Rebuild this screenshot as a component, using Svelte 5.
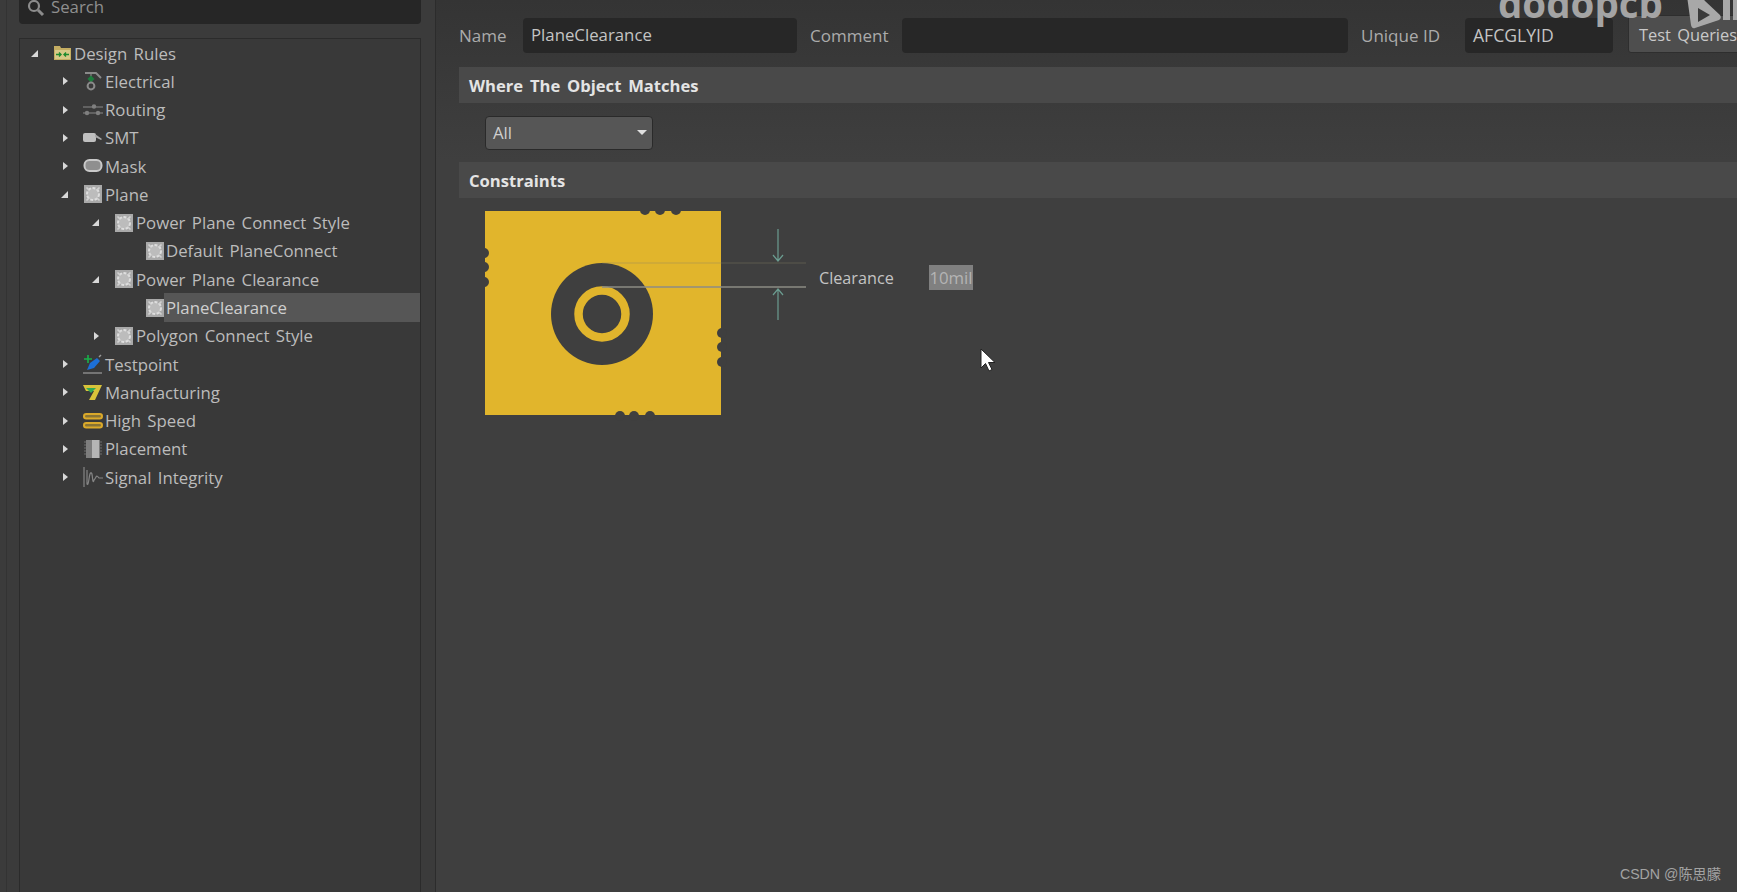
<script>
  const rows = [
    { label: 'Design Rules', depth: 0, open: true, icon: 'folder' },
    { label: 'Electrical', depth: 1, icon: 'electrical' },
    { label: 'Routing', depth: 1, icon: 'routing' },
    { label: 'SMT', depth: 1, icon: 'smt' },
    { label: 'Mask', depth: 1, icon: 'mask' },
    { label: 'Plane', depth: 1, open: true, icon: 'plane' },
    { label: 'Power Plane Connect Style', depth: 2, open: true, icon: 'plane' },
    { label: 'Default PlaneConnect', depth: 3, leaf: true, icon: 'plane' },
    { label: 'Power Plane Clearance', depth: 2, open: true, icon: 'plane' },
    { label: 'PlaneClearance', depth: 3, leaf: true, icon: 'plane', selected: true },
    { label: 'Polygon Connect Style', depth: 2, icon: 'plane' },
    { label: 'Testpoint', depth: 1, icon: 'testpoint' },
    { label: 'Manufacturing', depth: 1, icon: 'manufacturing' },
    { label: 'High Speed', depth: 1, icon: 'highspeed' },
    { label: 'Placement', depth: 1, icon: 'placement' },
    { label: 'Signal Integrity', depth: 1, icon: 'signal' }
  ]

  // scallops cut into the edges of the plane drawing
  const notches = [
    [160, -1], [175, -1], [191, -1],
    [-1, 42], [-1, 56], [-1, 71],
    [237, 122], [237, 136], [237, 151],
    [135, 205], [149, 205], [165, 205]
  ]
</script>

{#snippet icon(name)}
  <svg class="ico" width="20" height="20" viewBox="0 0 20 20">
    {#if name === 'folder'}
      <path d="M1 3h6l1 2h10v12H1z" fill="#c4ad62" />
      <rect x="2" y="7" width="15" height="9" fill="#d8c987" />
      <path d="M3 11.5h5M6 9.5l2 2-2 2M16 11.5h-5M13 9.5l-2 2 2 2" stroke="#1f8a2e" stroke-width="1.4" fill="none" />
    {:else if name === 'electrical'}
      <path d="M2 2h11l5 5" stroke="#8a8a8a" stroke-width="2" fill="none" />
      <path d="M8 3v6" stroke="#777" stroke-width="1.5" />
      <rect x="5.5" y="5.5" width="5" height="5" transform="rotate(45 8 8)" fill="#1c7c3c" />
      <circle cx="8" cy="15" r="3.4" stroke="#8a8a8a" stroke-width="2" fill="none" />
    {:else if name === 'routing'}
      <path d="M0 7h20M0 13h20" stroke="#6f6f6f" stroke-width="1.3" />
      <circle cx="11" cy="6.5" r="2.2" fill="#7f7f7f" />
      <circle cx="4" cy="13" r="2.2" fill="#7f7f7f" />
      <circle cx="15" cy="13" r="2.2" fill="#7f7f7f" />
    {:else if name === 'smt'}
      <rect x="0" y="5" width="13" height="9" rx="2" fill="#c0c0c0" />
      <path d="M12 6l7 5-1 1-6-3z" fill="#a8a8a8" />
    {:else if name === 'mask'}
      <rect x="1.5" y="4" width="17" height="11" rx="5" fill="#8f8f8f" stroke="#c9c9c9" stroke-width="2" />
    {:else if name === 'plane'}
      <rect x="1" y="1" width="18" height="18" fill="#a9a9a9" />
      <circle cx="10" cy="10" r="6" fill="#bcbcbc" stroke="#dedede" stroke-width="2" stroke-dasharray="3 1.5" />
      <path d="M3.5 3.5l2.5 2.5M16.5 3.5l-2.5 2.5M3.5 16.5l2.5-2.5M16.5 16.5l-2.5-2.5" stroke="#d2d2d2" stroke-width="1.6" />
    {:else if name === 'testpoint'}
      <path d="M0 19h19" stroke="#b0b0b0" stroke-width="1" />
      <path d="M5 1v8M1 5h8" stroke="#19b14a" stroke-width="1.6" />
      <path d="M4 16l3-7 7-5 3 3-6 7z" fill="#1d6fd6" />
      <path d="M16 3l2-2" stroke="#999" stroke-width="1.4" />
    {:else if name === 'manufacturing'}
      <path d="M0 3h19l-7 15H6l5-9H3z" fill="#d8c33a" />
      <path d="M3 6h10l-5 5z" fill="#2eaa55" />
    {:else if name === 'highspeed'}
      <rect x="1" y="3" width="18" height="4.5" rx="2.2" fill="#8a7434" stroke="#dba92a" stroke-width="2" />
      <rect x="1" y="12" width="18" height="4.5" rx="2.2" fill="#8a7434" stroke="#dba92a" stroke-width="2" />
    {:else if name === 'placement'}
      <rect x="3" y="1" width="14" height="18" fill="#7d7d7d" />
      <rect x="9" y="1" width="7" height="18" fill="#b5b5b5" />
      <path d="M1 3h2M1 6h2M1 9h2M1 12h2M1 15h2M17 3h2M17 6h2M17 9h2M17 12h2M17 15h2" stroke="#6f6f6f" />
    {:else if name === 'signal'}
      <path d="M1 0V20M4 3V17Q5 19 6 12T8 6Q9 5 9.5 11T11 13Q12 12 13 10T16 11H20" stroke="#858585" stroke-width="1.2" fill="none" />
    {/if}
  </svg>
{/snippet}

<div class="screen">
  <aside class="side">
    <div class="search">
      <svg width="18" height="18" viewBox="0 0 18 18">
        <circle cx="7" cy="7" r="5" fill="none" stroke="#8c8c8c" stroke-width="2.2" />
        <path d="M11 11l5 5" stroke="#8c8c8c" stroke-width="3" />
      </svg>
      <span>Search</span>
    </div>
    <div class="tree">
      {#each rows as r}
        <div class="row depth{r.depth}">
          {#if !r.leaf}
            <span class="caret" class:open={r.open}></span>
          {/if}
          {@render icon(r.icon)}
          <span class="label" class:selected={r.selected}>{r.label}</span>
        </div>
      {/each}
    </div>
  </aside>

  <main class="content">
    <div class="fields">
      <span class="cap c-name">Name</span>
      <div class="input w-name">PlaneClearance</div>
      <span class="cap c-comment">Comment</span>
      <div class="input w-comment"></div>
      <span class="cap c-id">Unique ID</span>
      <div class="input w-id">AFCGLYID</div>
      <div class="btn">Test Queries</div>
    </div>

    <div class="bar">Where The Object Matches</div>
    <div class="where">
      <div class="select">All<i></i></div>
    </div>
    <div class="bar">Constraints</div>

    <div class="constraint">
      <svg class="diagram" width="350" height="220" viewBox="0 0 350 220">
        <rect width="236" height="204" fill="#e1b52c" />
        {#each notches as [cx, cy]}
          <circle {cx} {cy} r="5" fill="#3f3f3f" />
        {/each}
        <circle cx="117" cy="103" r="51" fill="#3f3f3f" />
        <circle cx="117" cy="103" r="23.5" fill="none" stroke="#e1b52c" stroke-width="8.5" />
        <path d="M117 52H321" stroke="#8a8464" stroke-opacity="0.4" />
        <path d="M117 76H321" stroke="#8d8d85" stroke-width="1.4" />
        <path d="M293 18V49M288 44l5 6 5-6M293 109V79M288 84l5-6 5 6" stroke="#6b9c90" stroke-width="1.2" fill="none" />
      </svg>
      <span class="clr">Clearance</span>
      <span class="val">10mil</span>
    </div>

    <svg class="cursor" width="18" height="26" viewBox="0 0 18 26">
      <path d="M1 1V20L5.5 15.5L9 23L12 21.5L8.5 14.5H15Z" fill="#fff" stroke="#222" stroke-width="1" />
    </svg>
  </main>

  <div class="wm">dodopcb</div>
  <svg class="bili" width="52" height="34" viewBox="0 0 52 34">
    <path d="M1 0H15L19 5L34 19Q36 22 33 24L9 32Q6 33 5 29Z" fill="#a8a8a8" />
    <path d="M12 12L24 19L12 26Z" fill="#3a3a3a" />
    <path d="M37 0H44V24H37ZM47 0H52V24H47Z" fill="#a8a8a8" />
  </svg>
  <div class="csdn">CSDN @陈思朦</div>
</div>

<style>
  :global(body) {
    margin: 0;
    background: #3f3f3f;
  }

  .screen {
    position: relative;
    display: flex;
    width: 1737px;
    height: 892px;
    overflow: hidden;
    background: #3f3f3f;
    font-family: "Open Sans", "Noto Sans CJK SC", sans-serif;
    color: #bdbdbd;
    font-size: 16.8px;
    word-spacing: 2px;
  }

  .side {
    box-sizing: border-box;
    width: 436px;
    flex: none;
    padding: 0 14px 0 19px;
    background: linear-gradient(90deg, #3b3b3b 6px, #333 6px, #333 7px, #3b3b3b 7px);
    border-right: 1px solid #2c2c2c;
    display: flex;
    flex-direction: column;
  }

  .search {
    box-sizing: border-box;
    height: 24px;
    flex: none;
    display: flex;
    align-items: flex-start;
    gap: 6px;
    padding: 0 8px;
    background: #262626;
    border-radius: 0 0 4px 4px;
    color: #8f8f8f;
    line-height: 14px;
  }

  .search svg {
    margin-top: -1px;
  }

  .tree {
    flex: 1;
    margin-top: 14px;
    background: #393939;
    border: 1px solid #2b2b2b;
    border-bottom: none;
  }

  .row {
    position: relative;
    display: flex;
    align-items: center;
    height: 28.28px;
    color: #bcbcbc;
  }

  .depth0 { padding-left: 33px; }
  .depth1 { padding-left: 63px; }
  .depth2 { padding-left: 94px; }
  .depth3 { padding-left: 125px; }

  .depth0 .label { margin-left: -2px; }
  .depth1 .label { margin-left: -1px; }
  .depth2 .label { margin-left: -1px; }

  .caret {
    position: absolute;
    margin-left: -20px;
    width: 0;
    height: 0;
    border-left: 5px solid #d8d8d8;
    border-top: 4px solid transparent;
    border-bottom: 4px solid transparent;
  }

  .caret.open {
    margin-left: -22px;
    border-left: 7px solid transparent;
    border-bottom: 7px solid #d8d8d8;
    border-top: none;
  }

  .ico {
    flex: none;
    margin-right: 2px;
  }

  .label {
    flex: 1;
    height: 100%;
    display: flex;
    align-items: center;
    padding-left: 1px;
    white-space: pre;
  }

  .label.selected {
    background: #565656;
    color: #cfcfcf;
    margin-left: -3px;
    padding-left: 2px;
  }

  .depth3 .label:not(.selected) {
    margin-left: -2px;
  }

  .content {
    position: relative;
    flex: 1;
    min-width: 0;
    padding-left: 23px;
    background: linear-gradient(#343434, #3f3f3f 160px);
  }

  .fields {
    display: flex;
    align-items: flex-end;
    height: 53px;
    margin-bottom: 14px;
    white-space: nowrap;
  }

  .cap {
    flex: none;
    font-size: 17px;
    color: #ababab;
    line-height: 35px;
    word-spacing: 0;
  }

  .c-name { width: 64px; }
  .c-comment { width: 92px; }
  .c-id { width: 104px; }

  .input {
    box-sizing: border-box;
    height: 35px;
    flex: none;
    padding: 0 8px;
    background: #272727;
    border-radius: 4px;
    color: #c4c4c4;
    line-height: 34px;
    margin-right: 13px;
  }

  .w-name { width: 274px; }
  .w-comment { width: 446px; }
  .w-id { width: 148px; margin-right: 15px; font-size: 17.6px; }

  .btn {
    width: 140px;
    height: 38px;
    flex: none;
    box-sizing: border-box;
    padding-left: 10px;
    line-height: 38px;
    background: #4e4e4e;
    border: 1px solid #2e2e2e;
    border-radius: 3px;
    color: #c9c9c9;
    font-size: 16.4px;
  }

  .bar {
    height: 36px;
    line-height: 37px;
    padding-left: 10px;
    background: #494949;
    color: #e4e4e4;
    font-weight: 700;
    font-size: 16.6px;
    word-spacing: 2.5px;
  }

  .where {
    height: 59px;
    padding: 13px 0 0 26px;
    box-sizing: border-box;
  }

  .select {
    position: relative;
    box-sizing: border-box;
    width: 168px;
    height: 34px;
    line-height: 32px;
    padding-left: 7px;
    background: #565656;
    border: 1px solid #2a2a2a;
    border-radius: 4px;
    color: #cfcfcf;
  }

  .select i {
    position: absolute;
    right: 5px;
    top: 13px;
    border-left: 5px solid transparent;
    border-right: 5px solid transparent;
    border-top: 5px solid #e0e0e0;
  }

  .constraint {
    position: relative;
    height: 220px;
    margin: 13px 0 0 26px;
  }

  .diagram {
    position: absolute;
    left: 0;
    top: 0;
  }

  .clr {
    position: absolute;
    left: 334px;
    top: 56px;
    font-size: 16.2px;
    color: #c4c4c4;
  }

  .val {
    position: absolute;
    left: 444px;
    top: 54px;
    width: 44px;
    height: 25px;
    line-height: 26px;
    text-align: center;
    background: #808080;
    color: #b4b4b4;
  }

  .cursor {
    position: absolute;
    left: 544px;
    top: 348px;
  }

  .wm {
    position: absolute;
    left: 1498px;
    top: -23px;
    font-family: "Open Sans", sans-serif;
    font-size: 38.5px;
    font-weight: 700;
    color: #a4a4a4;
    word-spacing: 0;
  }

  .bili {
    position: absolute;
    left: 1686px;
    top: -4px;
  }

  .csdn {
    position: absolute;
    right: 16px;
    bottom: 9px;
    font-family: "Liberation Sans", "Noto Sans CJK SC", sans-serif;
    font-size: 14.2px;
    color: #a3a3a3;
    word-spacing: 0;
  }
</style>
